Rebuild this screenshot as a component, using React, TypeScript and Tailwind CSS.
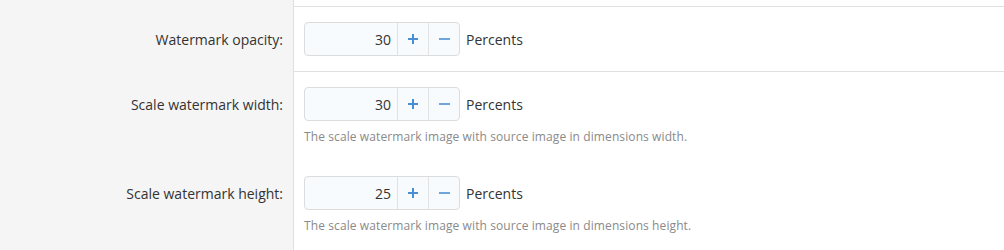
import React from 'react';

interface SpinRowProps {
  label: string;
  value: number;
  hint?: string;
  bordered?: boolean;
}

function Spinner({ value }: { value: number }) {
  return (
    <div className="flex items-center gap-[6px]">
      <div className="flex h-[34px] w-[156px] rounded-[4px] border border-[#dcdcdc] bg-[#f8fbfe]">
        <div className="flex flex-1 items-center justify-end pr-[6px] text-[14px] text-[#333]">{value}</div>
        <button className="flex w-[31px] items-center justify-center border-l border-[#e2e2e2]">
          <svg width="12" height="12" viewBox="0 0 12 12">
            <path d="M6 1v10M1 6h10" stroke="#4a8fd6" strokeWidth="2" />
          </svg>
        </button>
        <button className="flex w-[31px] items-center justify-center border-l border-[#e2e2e2]">
          <svg width="13" height="12" viewBox="0 0 13 12">
            <path d="M1 6h11" stroke="#6ea5dc" strokeWidth="2" />
          </svg>
        </button>
      </div>
      <span className="text-[14px] text-[#333]">Percents</span>
    </div>
  );
}

function SpinRow({ label, value, hint, bordered }: SpinRowProps) {
  return (
    <div className="flex">
      <div className="flex w-[294px] shrink-0 justify-end border-r border-[#e0e0e0] bg-[#f5f5f5] pr-[10px] pt-[15px]">
        <div className="flex h-[34px] items-center text-[14px] text-[#333]">{label}</div>
      </div>
      <div className={`flex-1 px-[10px] pt-[15px] ${bordered ? 'border-b border-[#e0e0e0] pb-[15px]' : 'pb-[15px]'}`}>
        <Spinner value={value} />
        {hint && <p className="mt-[7px] text-[12px] leading-[18px] tracking-[0.1px] text-[#8a8a8a]">{hint}</p>}
      </div>
    </div>
  );
}

export default function App() {
  return (
    <div className="h-[250px] overflow-hidden bg-white" style={{ fontFamily: '"Open Sans", "Noto Sans", sans-serif' }}>
      <div className="flex h-[7px]">
        <div className="w-[294px] shrink-0 border-r border-[#e0e0e0] bg-[#f5f5f5]" />
        <div className="flex-1 border-b border-[#e0e0e0]" />
      </div>
      <SpinRow label="Watermark opacity:" value={30} bordered />
      <SpinRow
        label="Scale watermark width:"
        value={30}
        hint="The scale watermark image with source image in dimensions width."
      />
      <SpinRow
        label="Scale watermark height:"
        value={25}
        hint="The scale watermark image with source image in dimensions height."
      />
      <div className="flex h-[40px]">
        <div className="w-[294px] shrink-0 border-r border-[#e0e0e0] bg-[#f5f5f5]" />
        <div className="flex-1" />
      </div>
    </div>
  );
}
